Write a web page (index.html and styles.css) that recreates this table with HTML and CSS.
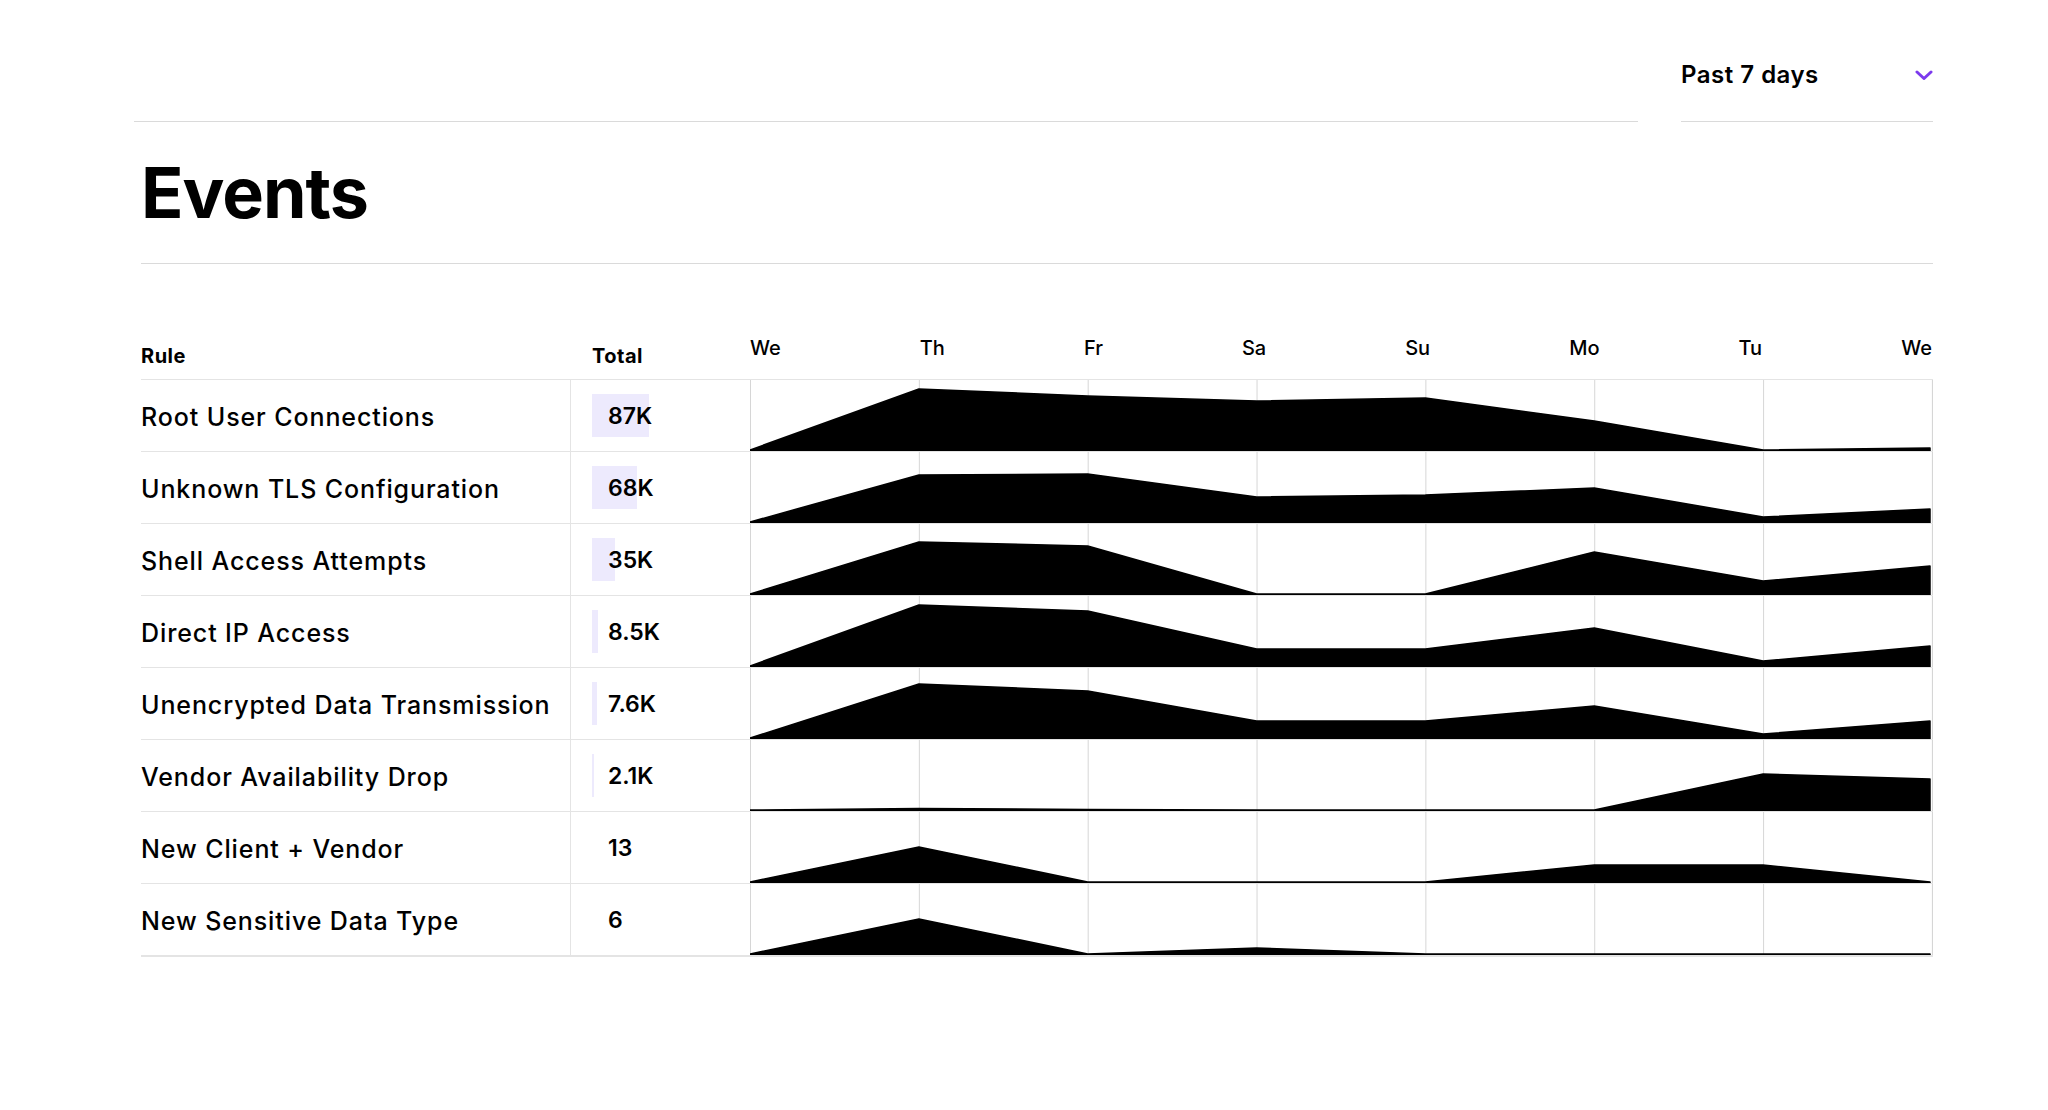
FILE: index.html
```html
<!DOCTYPE html>
<html lang="en">
<head>
  <meta charset="UTF-8" />
  <meta name="viewport" content="width=device-width, initial-scale=1.0"/>
  <title>Events</title>
  <link rel="stylesheet" href="styles.css">
</head>
<body>

  <div class="filter-bar">
    <div class="filter-rule"></div>
    <div class="range-select">
      <span>Past 7 days</span>
      <svg class="chevron" width="18" height="10" viewBox="0 0 18 10">
        <path d="M2 2l7 6.5 7-6.5" />
      </svg>
    </div>
  </div>

  <main class="events">
    <h1 class="events-title">Events</h1>

    <div class="events-table">
      <div class="table-head">
        <div class="head-rule">Rule</div>
        <div class="head-total">Total</div>
        <div class="head-days">
          <span>We</span><span>Th</span><span>Fr</span><span>Sa</span><span>Su</span><span>Mo</span><span>Tu</span><span>We</span>
        </div>
      </div>

      <div class="table-row">
        <div class="row-rule">Root User Connections</div>
        <div class="row-total"><div class="count"><span class="count-bar" style="width:57px"></span><span class="count-value">87K</span></div></div>
        <div class="row-chart">
          <svg class="spark" viewBox="0 0 1182 71" preserveAspectRatio="none"><path d="M0 71V70L168.9 9L337.7 16L506.6 21L675.4 18L844.3 41L1013.1 70L1180 68V71Z"/></svg>
        </div>
      </div>

      <div class="table-row">
        <div class="row-rule">Unknown TLS Configuration</div>
        <div class="row-total"><div class="count"><span class="count-bar" style="width:45px"></span><span class="count-value">68K</span></div></div>
        <div class="row-chart">
          <svg class="spark" viewBox="0 0 1182 71" preserveAspectRatio="none"><path d="M0 71V70L168.9 23L337.7 22L506.6 45L675.4 43L844.3 36L1013.1 65L1180 57V71Z"/></svg>
        </div>
      </div>

      <div class="table-row">
        <div class="row-rule">Shell Access Attempts</div>
        <div class="row-total"><div class="count"><span class="count-bar" style="width:23px"></span><span class="count-value">35K</span></div></div>
        <div class="row-chart">
          <svg class="spark" viewBox="0 0 1182 71" preserveAspectRatio="none"><path d="M0 71V70L168.9 18L337.7 22L506.6 70L675.4 70L844.3 28L1013.1 57L1180 42V71Z"/></svg>
        </div>
      </div>

      <div class="table-row">
        <div class="row-rule">Direct IP Access</div>
        <div class="row-total"><div class="count"><span class="count-bar" style="width:6px"></span><span class="count-value">8.5K</span></div></div>
        <div class="row-chart">
          <svg class="spark" viewBox="0 0 1182 71" preserveAspectRatio="none"><path d="M0 71V70L168.9 9L337.7 15L506.6 53L675.4 53L844.3 32L1013.1 65L1180 50V71Z"/></svg>
        </div>
      </div>

      <div class="table-row">
        <div class="row-rule">Unencrypted Data Transmission</div>
        <div class="row-total"><div class="count"><span class="count-bar" style="width:5px"></span><span class="count-value">7.6K</span></div></div>
        <div class="row-chart">
          <svg class="spark" viewBox="0 0 1182 71" preserveAspectRatio="none"><path d="M0 71V70L168.9 16L337.7 23L506.6 53L675.4 53L844.3 38L1013.1 66L1180 53V71Z"/></svg>
        </div>
      </div>

      <div class="table-row">
        <div class="row-rule">Vendor Availability Drop</div>
        <div class="row-total"><div class="count"><span class="count-bar" style="width:2px"></span><span class="count-value">2.1K</span></div></div>
        <div class="row-chart">
          <svg class="spark" viewBox="0 0 1182 71" preserveAspectRatio="none"><path d="M0 71V70L168.9 68.5L337.7 69.5L506.6 70L675.4 70L844.3 70L1013.1 34L1180 39V71Z"/></svg>
        </div>
      </div>

      <div class="table-row">
        <div class="row-rule">New Client + Vendor</div>
        <div class="row-total"><div class="count"><span class="count-bar" style="width:0"></span><span class="count-value">13</span></div></div>
        <div class="row-chart">
          <svg class="spark" viewBox="0 0 1182 71" preserveAspectRatio="none"><path d="M0 71V70L168.9 35L337.7 70L506.6 70L675.4 70L844.3 53L1013.1 53L1180 70V71Z"/></svg>
        </div>
      </div>

      <div class="table-row">
        <div class="row-rule">New Sensitive Data Type</div>
        <div class="row-total"><div class="count"><span class="count-bar" style="width:0"></span><span class="count-value">6</span></div></div>
        <div class="row-chart">
          <svg class="spark" viewBox="0 0 1182 71" preserveAspectRatio="none"><path d="M0 71V70L168.9 35L337.7 70L506.6 64L675.4 70L844.3 70L1013.1 70L1180 70V71Z"/></svg>
        </div>
      </div>
    </div>
  </main>

</body>
</html>
```

FILE: styles.css
```css
body {
  margin: 0;
  background: #ffffff;
  color: #000;
  font-family: Inter, "Noto Sans", sans-serif;
}

/* top filter */
.filter-bar {
  display: flex;
  align-items: flex-end;
  gap: 43px;
  margin: 0 115px 0 134px;
  padding-top: 59px;
}

.filter-rule {
  flex: 1;
  border-bottom: 1px solid #dadada;
}

.range-select {
  width: 252px;
  display: flex;
  justify-content: space-between;
  align-items: center;
  padding-bottom: 30px;
  border-bottom: 1px solid #dadada;
  font-size: 24px;
  font-weight: 600;
  line-height: 32px;
  letter-spacing: 0.5px;
}

.chevron path {
  fill: none;
  stroke: #7c3aed;
  stroke-width: 3;
  stroke-linecap: round;
  stroke-linejoin: round;
}

/* events */
.events {
  margin: 0 115px 0 141px;
}

.events-title {
  margin: 0;
  padding: 36px 0 35px;
  font-size: 70px;
  line-height: 70px;
  font-weight: 700;
  letter-spacing: -1px;
  border-bottom: 1px solid #dadada;
}

.events-table {
  margin-top: 72px;
  border-bottom: 1px solid #e4e4e4;
}

.table-head,
.table-row {
  display: grid;
  grid-template-columns: 429px 180px 1fr;
}

.table-head {
  height: 43px;
  align-items: end;
  border-bottom: 1px solid #e4e4e4;
  font-size: 20px;
  line-height: 24px;
  font-weight: 700;
}

.head-rule {
  padding-bottom: 12px;
  letter-spacing: 0.5px;
}

.head-total {
  padding: 0 0 12px 22px;
  letter-spacing: 0.5px;
}

.head-days {
  display: flex;
  justify-content: space-between;
  padding: 0 1px 20px 0;
  font-weight: 500;
}

.table-row {
  height: 71px;
  border-bottom: 1px solid #e4e4e4;
}

.row-rule {
  display: flex;
  align-items: center;
  padding-top: 3px;
  font-size: 25px;
  font-weight: 500;
  letter-spacing: 0.9px;
}

.row-total {
  display: flex;
  align-items: center;
  padding: 2px 0 0 21px;
  border-left: 1px solid #e4e4e4;
}

.count {
  position: relative;
  padding-left: 16px;
  font-size: 23px;
  font-weight: 600;
  line-height: 45px;
}

.count-bar {
  position: absolute;
  left: 0;
  top: 0;
  height: 43px;
  background: #edeafd;
}

.count-value {
  position: relative;
}

.row-chart {
  border-right: 1px solid #d6d6d6;
  background-image: linear-gradient(90deg, #d6d6d6 0 1px, transparent 1px);
  background-size: calc(100% / 7) 100%;
}

.spark {
  display: block;
  width: 100%;
  height: 71px;
}

.spark path {
  fill: #000;
  stroke: #000;
  stroke-width: 1.5;
  stroke-linejoin: round;
}
```
